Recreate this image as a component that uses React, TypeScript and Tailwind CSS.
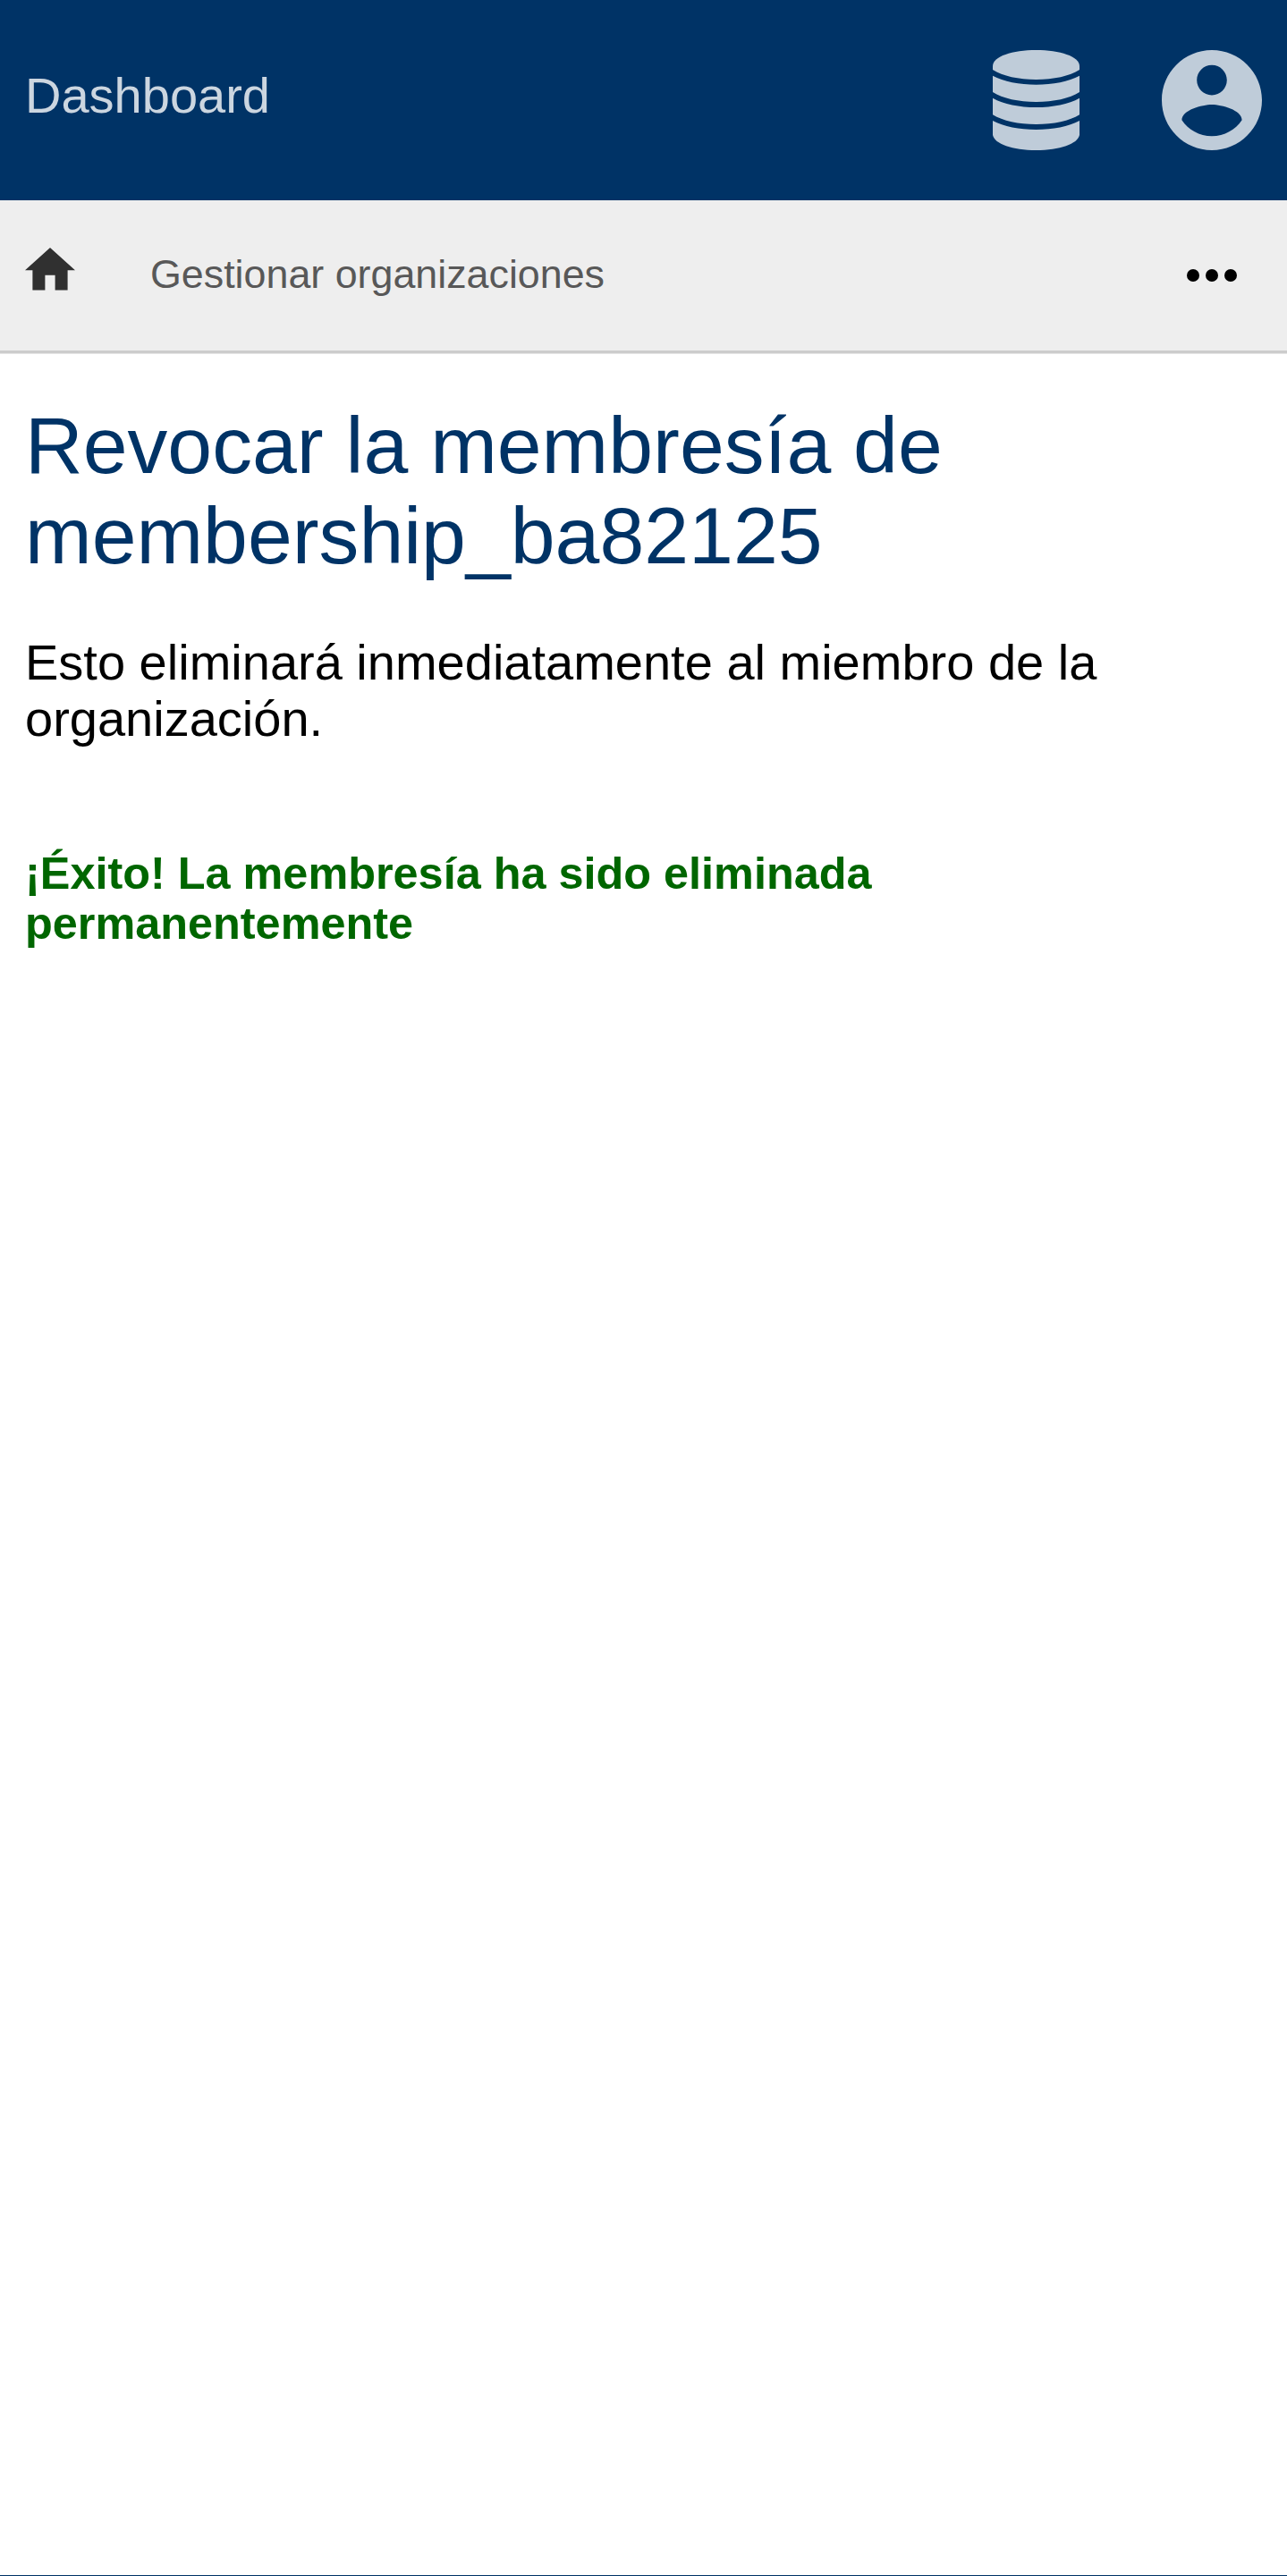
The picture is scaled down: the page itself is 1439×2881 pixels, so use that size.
import React from "react";

function DatabaseIcon({ className }: { className: string }) {
  return (
    <svg viewBox="0 0 97 112" className={className} fill="currentColor" aria-hidden="true">
      <path d="M0 18C0 7 22 0 48.5 0S97 7 97 18V22C86 29 68 33 48.5 33S11 29 0 22Z" />
      <path d="M0 28.7C12 35.2 30 38.7 48.5 38.7S85 35.2 97 28.7V47C86 54 68 58 48.5 58S11 54 0 47Z" />
      <path d="M0 53.7C12 60.5 30 64 48.5 64S85 60.5 97 53.7V72.2C86 79 68 83 48.5 83S11 79 0 72.2Z" />
      <path d="M0 79C12 85.5 30 89 48.5 89S85 85.5 97 79V95C95 105 75 112 48.5 112S2 105 0 95Z" />
    </svg>
  );
}

function AccountIcon({ className }: { className: string }) {
  return (
    <svg viewBox="2 2 20 20" className={className} fill="currentColor" aria-hidden="true">
      <path d="M12 2C6.48 2 2 6.48 2 12s4.48 10 10 10 10-4.48 10-10S17.52 2 12 2zm0 3c1.66 0 3 1.34 3 3s-1.34 3-3 3-3-1.34-3-3 1.34-3 3-3zm0 14.2c-2.5 0-4.71-1.28-6-3.22.03-1.99 4-3.08 6-3.08 1.99 0 5.97 1.09 6 3.08-1.29 1.94-3.5 3.22-6 3.22z" />
    </svg>
  );
}

function HomeIcon({ className }: { className: string }) {
  return (
    <svg viewBox="2 3 20 17" className={className} fill="currentColor" aria-hidden="true">
      <path d="M10 20v-6h4v6h5v-8h3L12 3 2 12h3v8z" />
    </svg>
  );
}

function MoreIcon({ className }: { className: string }) {
  return (
    <svg viewBox="4 10 16 4" className={className} fill="currentColor" aria-hidden="true">
      <circle cx="6" cy="12" r="2" />
      <circle cx="12" cy="12" r="2" />
      <circle cx="18" cy="12" r="2" />
    </svg>
  );
}

export default function App() {
  return (
    <div className="flex min-h-[2881px] flex-col border-b border-[#003366] bg-white font-['Liberation_Sans',Arial,sans-serif] text-black">
      <header className="flex h-[224px] items-start justify-between bg-[#003366] px-7 text-[#bfccd9]">
        <a className="mt-[75px] text-[56px] leading-[63px] text-[#ccd6e0]">Dashboard</a>
        <div className="mt-14 flex items-center gap-[92px]">
          <DatabaseIcon className="h-[112px] w-[97px]" />
          <AccountIcon className="h-[112px] w-[112px]" />
        </div>
      </header>
      <nav className="flex h-[171px] items-start border-b-[3px] border-[#ccc] bg-[#eee] pr-14 pl-7 text-[#585858] shadow-[0_1px_0_#e5e5e5]">
        <HomeIcon className="mt-[53.4px] h-[47.6px] w-14 text-[#303030]" />
        <a className="mt-[57px] ml-[84px] text-[44.8px] leading-[51px]">Gestionar organizaciones</a>
        <MoreIcon className="mt-[77px] ml-auto h-3.5 w-14 text-black" />
      </nav>
      <main className="px-7">
        <h1 className="mt-[53px] text-[89.6px] leading-[101px] text-[#003366]">Revocar la membresía de<br />membership_ba82125</h1>
        <p className="mt-[59px] text-[56px] leading-[63px]">Esto eliminará inmediatamente al miembro de la<br />organización.</p>
        <p className="mt-[114px] text-[50.4px] leading-[56px] font-bold text-[#006600]">¡Éxito! La membresía ha sido eliminada<br />permanentemente</p>
      </main>
    </div>
  );
}
